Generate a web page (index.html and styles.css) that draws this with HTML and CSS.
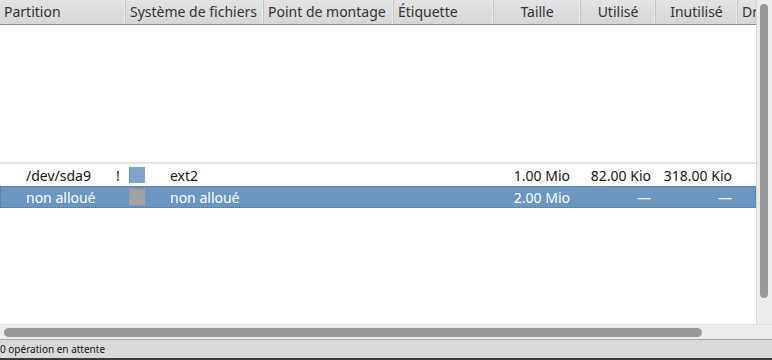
FILE: index.html
```html
<!DOCTYPE html>
<html lang="fr">
<head>
  <meta charset="UTF-8">
  <title>GParted</title>
  <link rel="stylesheet" href="styles.css">
</head>
<body>
  <div class="window">
    <div class="view">
      <div class="list">
        <div class="head">
          <div class="col c-part">Partition</div>
          <div class="col c-fs">Système de fichiers</div>
          <div class="col c-mount">Point de montage</div>
          <div class="col c-label">Étiquette</div>
          <div class="col c-size num-c">Taille</div>
          <div class="col c-used num-c">Utilisé</div>
          <div class="col c-free num-c">Inutilisé</div>
          <div class="col c-flags">Dr</div>
        </div>
        <div class="rows">
          <div class="spacer"></div>
          <div class="row">
            <div class="cell c-part"><span class="name">/dev/sda9</span><span class="warn">!</span></div>
            <div class="cell c-fs"><span class="swatch ext2"></span><span>ext2</span></div>
            <div class="cell c-mount"></div>
            <div class="cell c-label"></div>
            <div class="cell c-size num">1.00 Mio</div>
            <div class="cell c-used num">82.00 Kio</div>
            <div class="cell c-free num">318.00 Kio</div>
            <div class="cell c-flags"></div>
          </div>
          <div class="row selected">
            <div class="cell c-part"><span class="name">non alloué</span></div>
            <div class="cell c-fs"><span class="swatch unalloc"></span><span>non alloué</span></div>
            <div class="cell c-mount"></div>
            <div class="cell c-label"></div>
            <div class="cell c-size num">2.00 Mio</div>
            <div class="cell c-used num">—</div>
            <div class="cell c-free num">—</div>
            <div class="cell c-flags"></div>
          </div>
        </div>
      </div>
      <div class="vscroll"><div class="vthumb"></div></div>
    </div>
    <div class="hscroll"><div class="hthumb"></div></div>
    <div class="status">0 opération en attente</div>
  </div>
</body>
</html>
```

FILE: styles.css
```css
/* Fenetre principale */
body {
  margin: 0;
  padding: 0;
  background: #ffffff;
  font-family: 'Noto Sans', 'DejaVu Sans', sans-serif;
  font-size: 14px;
  color: #1e1e1e;
  overflow: hidden;
}
.window {
  width: 772px;
  height: 360px;
  display: flex;
  flex-direction: column;
}
/* Zone de la liste */
.view {
  display: grid;
  grid-template-columns: 757px 15px;
  height: 324px;
  flex-shrink: 0;
}
.list {
  display: flex;
  flex-direction: column;
  border-right: 1px solid #d8d8d8;
  overflow: hidden;
  min-width: 0;
}
.head {
  display: flex;
  height: 24px;
  flex-shrink: 0;
  background: linear-gradient(#e4e4e4, #d6d6d6);
  border-bottom: 1px solid #8a8a8a;
  color: #333333;
}
.col {
  flex-shrink: 0;
  height: 24px;
  line-height: 23px;
  padding-left: 4px;
  box-sizing: border-box;
  border-right: 1px solid #c4c4c4;
  box-shadow: inset -1px 0 0 #ececec;
  white-space: nowrap;
  overflow: hidden;
}
.num-c {
  text-align: center;
  padding-left: 0;
}
.c-part { width: 126px; }
.c-fs { width: 138px; }
.c-mount { width: 130px; }
.c-label { width: 100px; }
.c-size { width: 87px; }
.c-used { width: 75px; }
.c-free { width: 82px; }
.c-flags { width: 40px; border-right: none; box-shadow: none; }
.rows {
  flex: 1;
  display: flex;
  flex-direction: column;
}
.spacer {
  height: 137px;
  flex-shrink: 0;
  border-bottom: 2px solid #e6e6e6;
}
.row {
  display: flex;
  height: 22px;
  flex-shrink: 0;
  align-items: center;
  color: #141414;
}
.row.selected {
  background: #6a96c0;
  color: #ffffff;
  outline: 1px dotted #4a76a0;
  outline-offset: -1px;
}
.cell {
  flex-shrink: 0;
  display: flex;
  align-items: center;
  white-space: nowrap;
  box-sizing: border-box;
}
.c-part .name {
  margin-left: 26px;
  width: 90px;
}
.swatch {
  width: 16px;
  height: 16px;
  margin-left: 3px;
  margin-right: 25px;
  box-sizing: border-box;
}
.swatch.ext2 {
  background: #7fa4c8;
  border-left: 1px solid #6d8fb3;
}
.swatch.unalloc {
  background: #a2a2a2;
}
.num {
  justify-content: flex-end;
  padding-right: 11px;
}
.c-used.num { padding-right: 5px; }
.c-free.num { padding-right: 6px; }
/* Barre de defilement verticale */
.vscroll {
  background: #ececec;
  padding: 4px 0 0 3px;
}
.vthumb {
  width: 8px;
  height: 294px;
  border-radius: 4px;
  background: #989898;
}
/* Barre de defilement horizontale */
.hscroll {
  height: 15px;
  flex-shrink: 0;
  background: #ececec;
  border-top: 1px solid #e0e0e0;
  padding: 3px 0 0 4px;
  box-sizing: border-box;
}
.hthumb {
  width: 698px;
  height: 9px;
  border-radius: 5px;
  background: #989898;
}
/* Barre d'etat */
.status {
  flex: 1;
  background: #d9d9d9;
  border-top: 1px solid #a8a8a8;
  border-bottom: 2px solid #3a3a3a;
  font-size: 10px;
  line-height: 18px;
  color: #141414;
}
```
